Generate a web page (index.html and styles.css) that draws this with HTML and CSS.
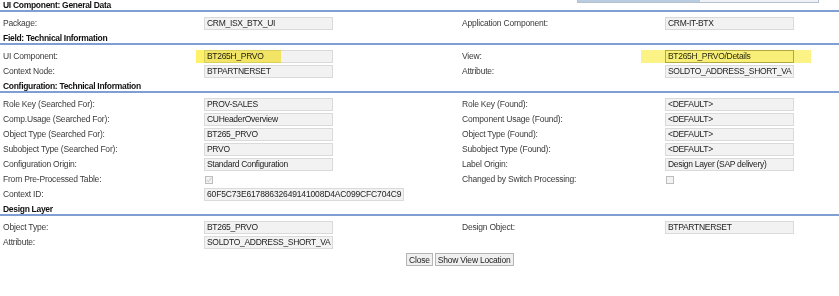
FILE: index.html
```html
<!DOCTYPE html>
<html lang="en">
<head>
  <meta charset="UTF-8" />
  <title>Technical Data</title>
  <link rel="stylesheet" href="styles.css">
</head>
<body>
  <div class="page">
    <!-- resto da barra cortada no topo -->
    <div class="topbar"><span class="topbar-fill"></span></div>

    <div class="section">
      <div class="section-title">UI Component: General Data</div>
      <div class="fields">
        <div class="label">Package:</div>
        <div class="cell"><span class="value">CRM_ISX_BTX_UI</span></div>
        <div class="label">Application Component:</div>
        <div class="cell"><span class="value">CRM-IT-BTX</span></div>
      </div>
    </div>

    <div class="section">
      <div class="section-title">Field: Technical Information</div>
      <div class="fields">
        <div class="label">UI Component:</div>
        <div class="cell"><span class="value">BT265H_PRVO</span><span class="marker marker-left"></span></div>
        <div class="label">View:</div>
        <div class="cell"><span class="marker marker-right"></span><span class="value value-marked">BT265H_PRVO/Details</span></div>

        <div class="label">Context Node:</div>
        <div class="cell"><span class="value">BTPARTNERSET</span></div>
        <div class="label">Attribute:</div>
        <div class="cell"><span class="value">SOLDTO_ADDRESS_SHORT_VA</span></div>
      </div>
    </div>

    <div class="section">
      <div class="section-title">Configuration: Technical Information</div>
      <div class="fields">
        <div class="label">Role Key (Searched For):</div>
        <div class="cell"><span class="value">PROV-SALES</span></div>
        <div class="label">Role Key (Found):</div>
        <div class="cell"><span class="value">&lt;DEFAULT&gt;</span></div>

        <div class="label">Comp.Usage (Searched For):</div>
        <div class="cell"><span class="value">CUHeaderOverview</span></div>
        <div class="label">Component Usage (Found):</div>
        <div class="cell"><span class="value">&lt;DEFAULT&gt;</span></div>

        <div class="label">Object Type (Searched For):</div>
        <div class="cell"><span class="value">BT265_PRVO</span></div>
        <div class="label">Object Type (Found):</div>
        <div class="cell"><span class="value">&lt;DEFAULT&gt;</span></div>

        <div class="label">Subobject Type (Searched For):</div>
        <div class="cell"><span class="value">PRVO</span></div>
        <div class="label">Subobject Type (Found):</div>
        <div class="cell"><span class="value">&lt;DEFAULT&gt;</span></div>

        <div class="label">Configuration Origin:</div>
        <div class="cell"><span class="value">Standard Configuration</span></div>
        <div class="label">Label Origin:</div>
        <div class="cell"><span class="value">Design Layer (SAP delivery)</span></div>

        <div class="label">From Pre-Processed Table:</div>
        <div class="cell">
          <span class="checkbox">
            <svg width="6" height="6" viewBox="0 0 6 6"><path d="M0.5 3 L2.3 4.8 L5.5 0.8" fill="none" stroke="#c2c2c2" stroke-width="1"/></svg>
          </span>
        </div>
        <div class="label">Changed by Switch Processing:</div>
        <div class="cell"><span class="checkbox"></span></div>

        <div class="label">Context ID:</div>
        <div class="cell"><span class="value value-wide">60F5C73E61788632649141008D4AC099CFC704C9</span></div>
        <div class="label"></div>
        <div class="cell"></div>
      </div>
    </div>

    <div class="section">
      <div class="section-title">Design Layer</div>
      <div class="fields">
        <div class="label">Object Type:</div>
        <div class="cell"><span class="value">BT265_PRVO</span></div>
        <div class="label">Design Object:</div>
        <div class="cell"><span class="value">BTPARTNERSET</span></div>

        <div class="label">Attribute:</div>
        <div class="cell"><span class="value">SOLDTO_ADDRESS_SHORT_VA</span></div>
        <div class="label"></div>
        <div class="cell"></div>
      </div>
    </div>

    <div class="buttons">
      <button type="button">Close</button>
      <button type="button">Show View Location</button>
    </div>
  </div>
</body>
</html>
```

FILE: styles.css
```css
body {
  margin: 0;
  background: #fff;
  font-family: "Liberation Sans", Arial, sans-serif;
  font-size: 8.5px;
  color: #3a3a3a;
}

.page {
  position: relative;
  width: 839px;
}

.topbar {
  position: absolute;
  top: 0;
  left: 577px;
  width: 240px;
  height: 2px;
  background: #eef2f7;
  border: 1px solid #b4c0cc;
  border-top: none;
}

.topbar-fill {
  display: block;
  width: 122px;
  height: 2px;
  background: #b9cce2;
}

.section-title {
  height: 10px;
  line-height: 11px;
  padding-left: 3px;
  font-weight: bold;
  letter-spacing: -0.3px;
  color: #111;
  border-bottom: 2px solid #7e9ed4;
}

.fields {
  display: grid;
  grid-template-columns: 201px 258px 203px 1fr;
  grid-auto-rows: 15px;
  padding: 4px 0 2px;
}

.label {
  padding-left: 3px;
  line-height: 15px;
  letter-spacing: -0.2px;
  white-space: nowrap;
}

.cell {
  position: relative;
  display: flex;
  align-items: center;
  padding-left: 3px;
}

.value {
  box-sizing: border-box;
  width: 129px;
  height: 13px;
  line-height: 11px;
  padding-left: 2px;
  background: #f2f2f2;
  border: 1px solid #dadada;
  color: #222;
  letter-spacing: -0.3px;
  white-space: nowrap;
  overflow: hidden;
}

.value-wide {
  width: 200px;
  letter-spacing: -0.15px;
}

.value-marked {
  position: relative;
  background: #f8ef78;
  border-color: #b3a83e;
  color: #2a2a10;
}

.marker {
  position: absolute;
  top: 1px;
  height: 13px;
  background: #fff26a;
  mix-blend-mode: multiply;
}

.marker-left {
  left: -5px;
  width: 85px;
}

.marker-right {
  left: -21px;
  width: 170px;
  background: #fbf386;
}

.checkbox {
  box-sizing: border-box;
  width: 8px;
  height: 8px;
  margin-left: 1px;
  border: 1px solid #bdbdbd;
  background: #f3f3f3;
  display: flex;
  align-items: center;
  justify-content: center;
}

.buttons {
  display: flex;
  gap: 2px;
  padding: 1px 0 0 406px;
}

button {
  font-family: "Liberation Sans", Arial, sans-serif;
  font-size: 8.5px;
  letter-spacing: -0.2px;
  color: #222;
  height: 13px;
  line-height: 10px;
  padding: 0 2px;
  background: #f0f0f0;
  border: 1px solid #b5b5b5;
  border-radius: 0;
}
```
